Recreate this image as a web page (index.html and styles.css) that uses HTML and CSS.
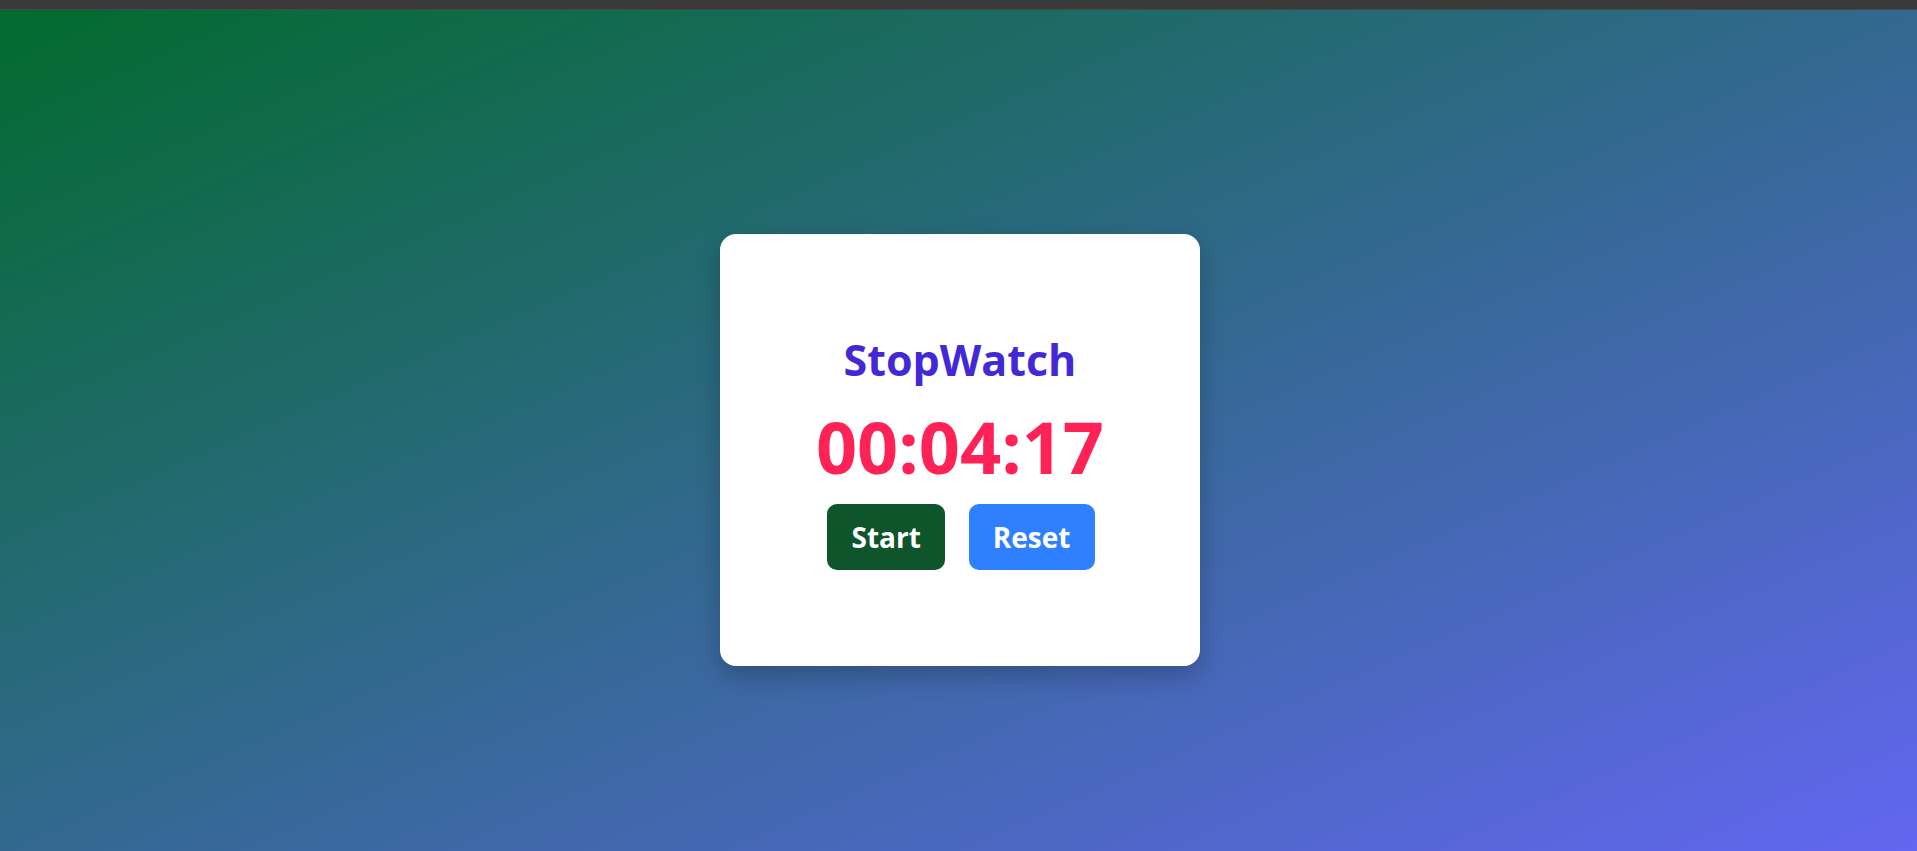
FILE: index.html
```html
<!DOCTYPE html>
<html lang="en">
<head>
<meta charset="utf-8">
<title>StopWatch</title>
<link rel="stylesheet" href="styles.css">
</head>
<body>
<div class="topbar"></div>
<main class="stage">
  <section class="card">
    <h1 class="title">StopWatch</h1>
    <div class="time">00:04:17</div>
    <div class="actions">
      <button class="btn btn-start">Start</button>
      <button class="btn btn-reset">Reset</button>
    </div>
  </section>
</main>
</body>
</html>
```

FILE: styles.css
```css
* { box-sizing: border-box; }
html, body { margin: 0; padding: 0; }
body {
  height: 851px;
  overflow: hidden;
  font-family: "Open Sans", "Noto Sans", sans-serif;
  background: #3b3b3b;
}
.topbar {
  height: 10px;
  background: #3a3a3a;
  border-bottom: 1px solid #474747;
}
.stage {
  height: 841px;
  background: linear-gradient(to bottom right, #026b2e, #6366f1);
  display: flex;
  justify-content: center;
  align-items: flex-start;
  padding-top: 224px;
  padding-left: 3px;
}
.card {
  width: 480px;
  height: 432px;
  background: #ffffff;
  border-radius: 16px;
  box-shadow: 0 10px 25px rgba(0, 0, 0, 0.22);
  display: flex;
  flex-direction: column;
  align-items: center;
  justify-content: center;
  padding-top: 3px;
}
.title {
  margin: 0;
  font-size: 43px;
  line-height: 54px;
  font-weight: 700;
  color: #4329d6;
}
.time {
  margin-top: 17px;
  font-size: 72px;
  line-height: 84px;
  font-weight: 700;
  color: #ff2257;
}
.actions {
  display: flex;
  gap: 24px;
  margin-top: 16px;
  padding-left: 2px;
}
.btn {
  height: 66px;
  padding: 0 24px;
  border: none;
  border-radius: 10px;
  font-family: inherit;
  font-size: 28px;
  font-weight: 700;
  color: #ffffff;
  cursor: pointer;
}
.btn-start { background: #0e552c; }
.btn-reset { background: #2f80ff; }
```
